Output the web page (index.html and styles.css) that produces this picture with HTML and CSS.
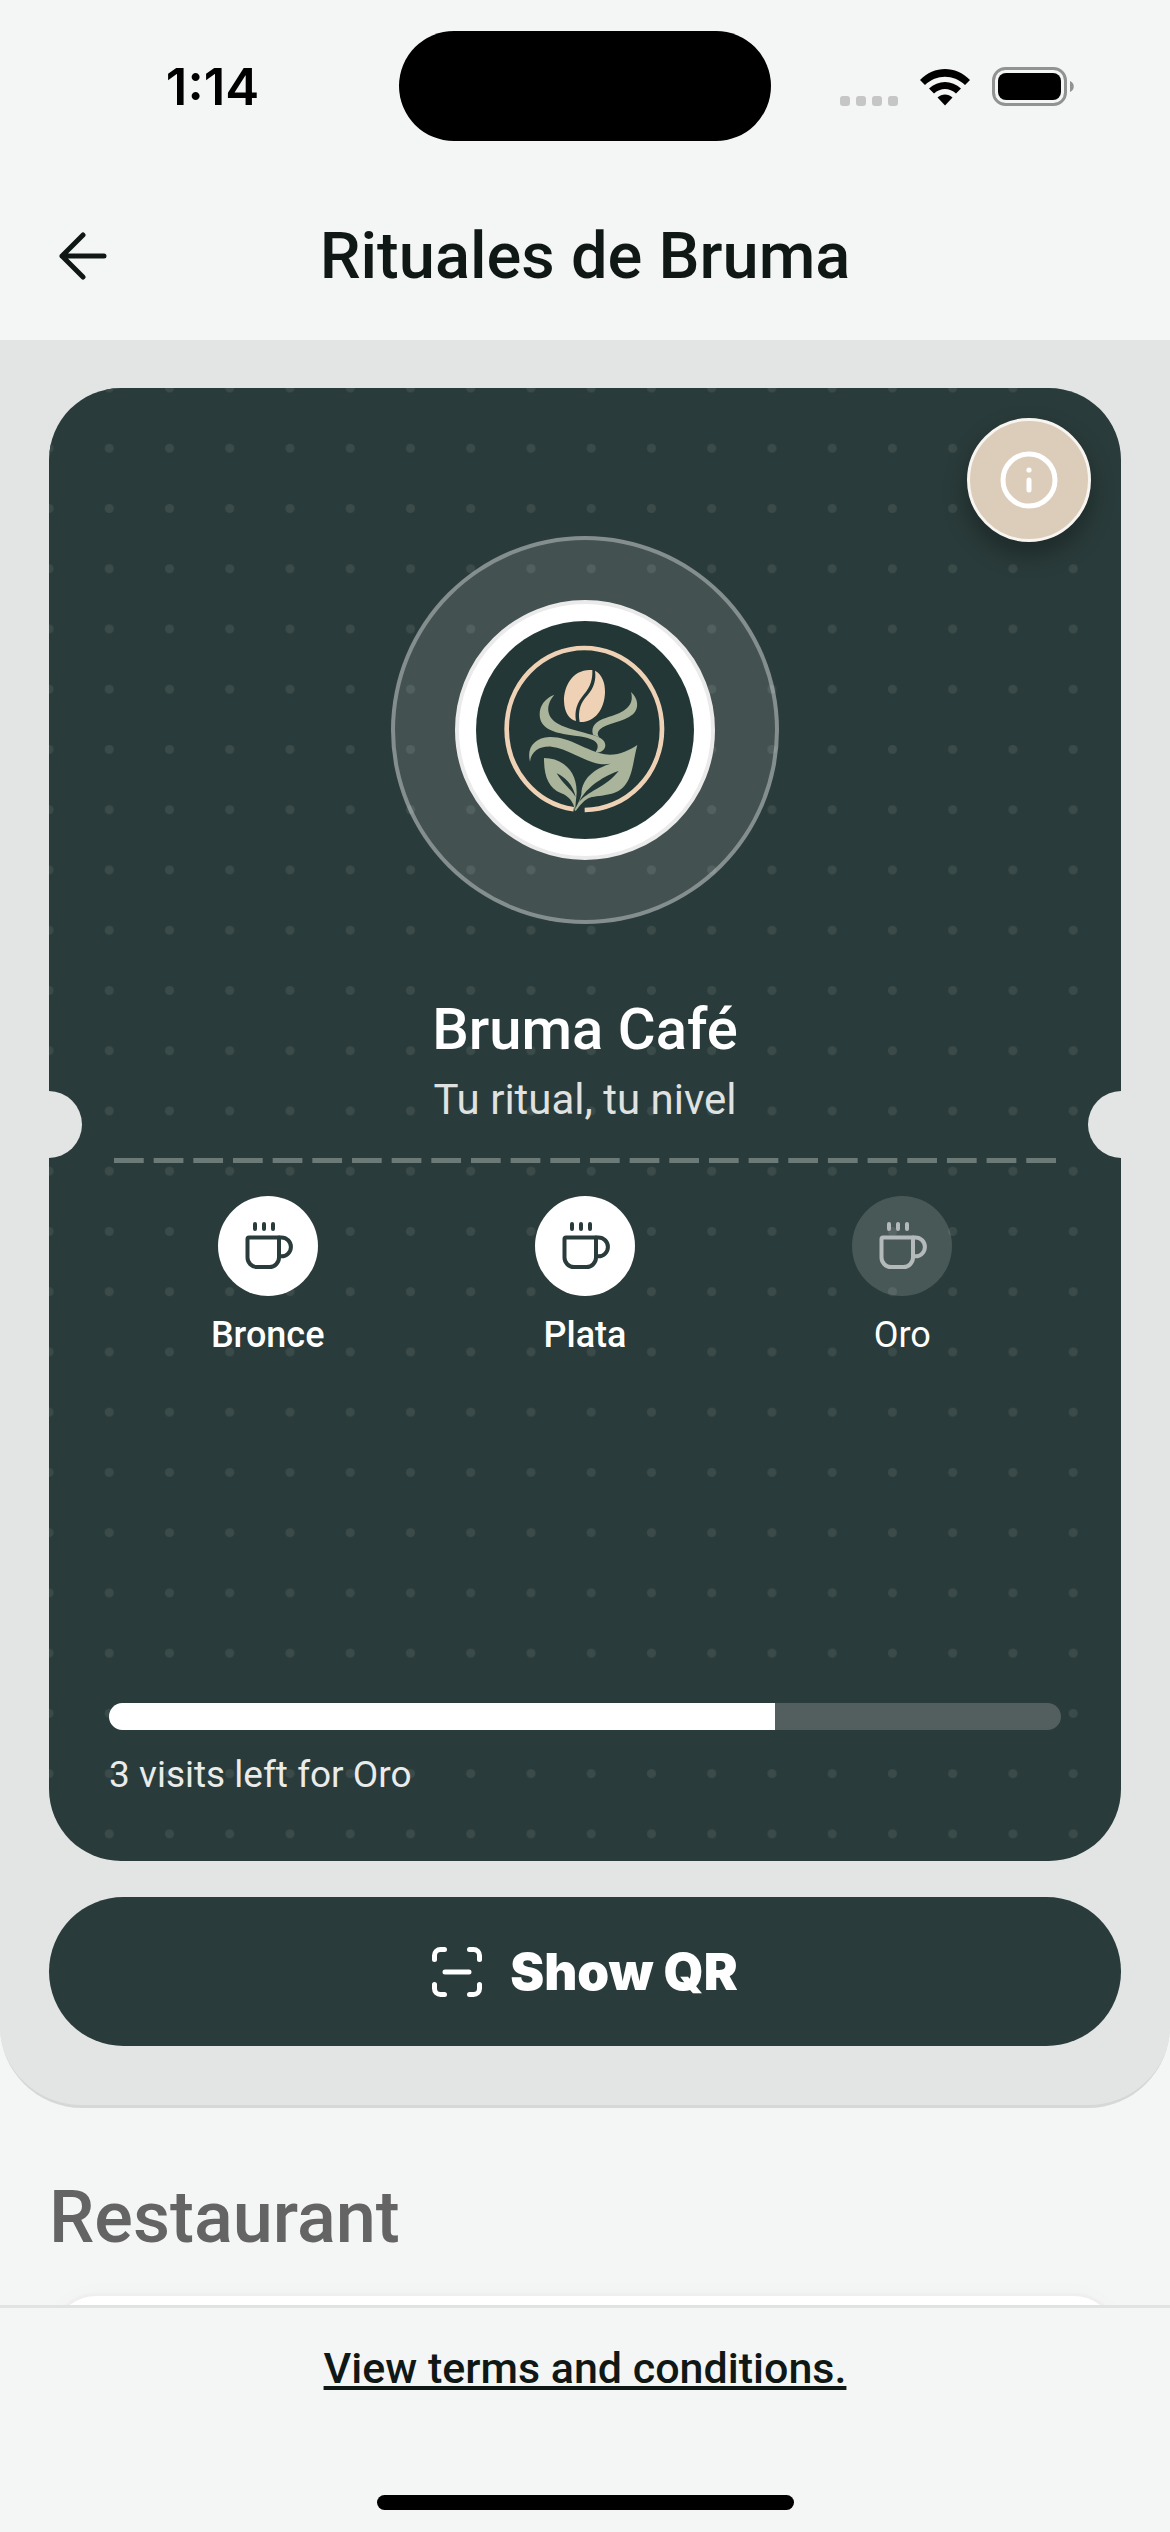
FILE: index.html
```html
<!DOCTYPE html>
<html lang="en">

<head>
    <meta charset="UTF-8">
    <meta name="viewport" content="width=device-width, initial-scale=1.0">
    <title>Rituales de Bruma</title>
    <link rel="stylesheet" href="styles.css">
</head>

<body>
    <!-- Shared icons -->
    <svg class="sprite" aria-hidden="true">
        <symbol id="cup" viewBox="0 0 100 100">
            <g fill="none" stroke="currentColor" stroke-width="4" stroke-linecap="round" stroke-linejoin="round">
                <path d="M61 41.5H31a1.5 1.5 0 0 0-1.5 1.5v18.5a9.5 9.5 0 0 0 9.5 9.5h12.5a9.5 9.5 0 0 0 9.5-9.5z" />
                <path d="M61 41.5h2.5a9.4 9.4 0 0 1 0 18.8H61" />
                <path d="M37 28v5M46 28v5M55 28v5" />
            </g>
        </symbol>
    </svg>

    <div class="status-bar">
        <span class="time">1:14</span>
        <span class="island"></span>
        <div class="status-icons">
            <svg width="58" height="10" viewBox="0 0 58 10" fill="#c5c6c5">
                <rect width="10" height="10" rx="3" />
                <rect x="16" width="10" height="10" rx="3" />
                <rect x="32" width="10" height="10" rx="3" />
                <rect x="48" width="10" height="10" rx="3" />
            </svg>
            <svg width="50" height="37" viewBox="0 0 50 37">
                <path d="M0 11C14-3.6 36-3.6 50 11l-5 5C33.5 5 16.5 5 5 16z" />
                <path d="M9 19.500c9-8.7 23-8.7 32 0l-5 5c-6.5-6-15.500-6-22 0z" />
                <path d="M17.500 28.500c4.400-4 10.600-4 15 0L25 36.500z" />
            </svg>
            <svg width="83" height="39" viewBox="0 0 83 39">
                <rect x="1.5" y="1.5" width="72" height="36" rx="12" fill="none" stroke="#919392" stroke-width="3" />
                <rect x="6" y="6" width="63" height="27" rx="8" />
                <path d="M78 14c5 2 5 9 0 11z" fill="#919392" />
            </svg>
        </div>
    </div>

    <header class="header">
        <button class="back-btn" aria-label="Back">
            <svg width="50" height="50" viewBox="0 0 50 50" fill="none" stroke="#101816" stroke-width="5" stroke-linecap="round" stroke-linejoin="round">
                <path d="M46 25H4M25 4L4 25l21 21" />
            </svg>
        </button>
        <h1>Rituales de Bruma</h1>
    </header>

    <main>
        <section class="loyalty">
            <div class="card">
                <svg class="card-dots" viewBox="0 0 356 489" preserveAspectRatio="xMinYMin slice" aria-hidden="true">
                    <pattern id="dots" x="-10" y="-10" width="20" height="20" patternUnits="userSpaceOnUse">
                        <circle cx="10" cy="10" r="1.5" />
                    </pattern>
                    <rect width="356" height="600" fill="url(#dots)" />
                </svg>

                <button class="info-btn" aria-label="Program details">
                    <svg width="58" height="58" viewBox="0 0 58 58" fill="none" stroke="#fff" stroke-width="5" stroke-linecap="round">
                        <circle cx="29" cy="29" r="26" />
                        <path d="M29 29v10" />
                        <circle cx="29" cy="19" r="2.6" fill="#fff" stroke="none" />
                    </svg>
                </button>

                <div class="logo-ring">
                    <div class="logo">
                        <svg viewBox="-41 0 654 654" role="img" aria-label="Bruma Café logo">
                            <path d="M252 564.700A233 243 0 0 1 51 324A233 243 0 0 1 517 324A233 243 0 0 1 285 567" fill="none" stroke="#efd2b5" stroke-width="14" />
                            <g fill="#efd2b5">
                                <path d="M308 147C250 142 222 195 223 240C224 275 240 297 259 300C254 270 262 245 283 220C303 197 309 175 308 147Z" />
                                <path d="M316 149C337 160 347 185 346 215C344 265 315 305 270 303C264 270 272 245 294 222C313 200 320 175 316 149Z" />
                            </g>
                            <g fill="#a9b49b">
                                <path d="M194 221C165 232 150 255 150 280C150 322 190 335 240 342C280 347 316 352 323 370C326 382 321 388 317 395C335 397 347 385 347 372C345 355 330 349 312 343C270 330 235 325 205 308C172 290 165 255 194 221Z" />
                                <path d="M424 213C445 232 450 260 430 280C400 305 350 306 331 325C323 333 322 340 328 349L310 341C302 315 320 300 350 290C395 277 437 260 424 213Z" />
                                <path d="M121 422C110 380 135 350 180 348C240 347 290 390 345 400C385 405 415 390 443 372C430 420 430 460 408 490C385 525 335 522 300 530C285 536 272 550 258 570L255 566C264 550 272 535 275 520C277 465 325 438 377 424C365 429 350 431 330 429C280 420 230 380 185 377C150 375 125 390 121 422Z" />
                                <path d="M163 411C220 412 262 450 261 515L256 570C252 540 235 525 215 517C175 500 163 465 163 411Z" />
                            </g>
                            <g fill="#233836">
                                <path d="M387 450C350 462 290 495 268 544C290 512 350 498 387 450Z" />
                                <path d="M201 457C225 468 250 490 258 528C245 505 220 490 201 457Z" />
                            </g>
                        </svg>
                    </div>
                </div>

                <h2>Bruma Café</h2>
                <p class="tagline">Tu ritual, tu nivel</p>

                <div class="divider">
                    <svg viewBox="0 0 950 5" preserveAspectRatio="none" aria-hidden="true">
                        <path d="M0 2.5H950" stroke="#6b7977" stroke-width="5" stroke-dasharray="30 10" />
                    </svg>
                </div>

                <ul class="tiers">
                    <li class="tier">
                        <svg class="tier-icon"><use href="#cup" /></svg>
                        <span>Bronce</span>
                    </li>
                    <li class="tier">
                        <svg class="tier-icon"><use href="#cup" /></svg>
                        <span>Plata</span>
                    </li>
                    <li class="tier locked">
                        <svg class="tier-icon"><use href="#cup" /></svg>
                        <span>Oro</span>
                    </li>
                </ul>

                <progress id="visits" value="70" max="100"></progress>
                <label class="visits-label" for="visits">3 visits left for Oro</label>
            </div>

            <button class="qr-btn">
                <svg width="50" height="50" viewBox="0 0 50 50" fill="none" stroke="#fff" stroke-width="5" stroke-linecap="round" stroke-linejoin="round">
                    <path d="M2.5 12.5v-4a6 6 0 0 1 6-6h4M37.5 2.5h4a6 6 0 0 1 6 6v4M47.5 37.5v4a6 6 0 0 1-6 6h-4M12.5 47.5h-4a6 6 0 0 1-6-6v-4M13 25h24" />
                </svg>
                Show QR
            </button>
        </section>

        <section class="restaurant">
            <h2>Restaurant</h2>
            <div class="restaurant-card"></div>
        </section>
    </main>

    <footer class="footer">
        <a href="#terms">View terms and conditions.</a>
        <span class="home-indicator"></span>
    </footer>
</body>

</html>
```
FILE: styles.css
```css
* {
    box-sizing: border-box;
}

body {
    display: flex;
    flex-direction: column;
    height: 100vh;
    margin: 0;
    background: #f4f6f5;
    color: #101816;
    font-family: Roboto, sans-serif;
}

h1,
h2,
p,
ul {
    margin: 0;
    padding: 0;
}

button {
    padding: 0;
    border: none;
    background: none;
    cursor: pointer;
}

svg {
    display: block;
}

.sprite {
    position: absolute;
    width: 0;
    height: 0;
}

/* Status bar */
.status-bar {
    display: grid;
    grid-template-columns: 1fr 372px 1fr;
    align-items: center;
    flex-shrink: 0;
    height: 172px;
}

.time {
    padding-left: 26px;
    color: #000;
    font-family: Inter, sans-serif;
    font-size: 51px;
    font-weight: 600;
    text-align: center;
}

.island {
    height: 110px;
    border-radius: 55px;
    background: #000;
}

.status-icons {
    display: flex;
    justify-content: center;
    align-items: flex-end;
    gap: 22px;
    padding-right: 26px;
}

/* Header */
.header {
    display: grid;
    grid-template-columns: 1fr auto 1fr;
    align-items: center;
    flex-shrink: 0;
    height: 168px;
    padding: 0 58px;
}

.header h1 {
    font-size: 65px;
    font-weight: 500;
    line-height: 80px;
}

.back-btn {
    justify-self: start;
}

main {
    flex: 1;
    min-height: 0;
    overflow: hidden;
}

/* Loyalty card */
.loyalty {
    padding: 48px 49px 59px;
    border-bottom: 3px solid #d6d8d7;
    border-radius: 0 0 82px 82px;
    background: #e2e5e4;
}

.card {
    position: relative;
    display: flex;
    flex-direction: column;
    align-items: center;
    min-height: 1473px;
    padding: 148px 60px 64px;
    border-radius: 72px;
    background: #293b3a;
    color: #fff;
    overflow: hidden;
}

.card > * {
    position: relative;
}

.card .card-dots {
    position: absolute;
    top: 0;
    left: 0;
    width: 100%;
    height: 100%;
    fill: #3b4b4a;
}

.card .info-btn {
    position: absolute;
    top: 30px;
    right: 30px;
    display: flex;
    justify-content: center;
    align-items: center;
    width: 124px;
    height: 124px;
    border: 3px solid #f8f5f1;
    border-radius: 50%;
    background: #dccdba;
    box-shadow: 0 12px 24px rgba(0, 0, 0, 0.3);
}

.logo-ring {
    display: flex;
    justify-content: center;
    align-items: center;
    width: 388px;
    height: 388px;
    border: 4px solid rgba(255, 255, 255, 0.35);
    border-radius: 50%;
    background: rgba(255, 255, 255, 0.12);
}

.logo {
    width: 260px;
    height: 260px;
    padding: 17px;
    border: 4px solid #ebeaea;
    border-radius: 50%;
    background: #fff;
}

.logo svg {
    border-radius: 50%;
    background: #233836;
}

.card h2 {
    margin-top: 71px;
    font-size: 58px;
    font-weight: 500;
    line-height: 68px;
}

.tagline {
    margin-top: 13px;
    color: #dfe2e1;
    font-size: 42px;
    line-height: 48px;
}

.divider {
    width: 100%;
    margin: 34px 0 33px;
    padding: 0 5px;
}

.divider svg {
    width: 100%;
    height: 5px;
}

/* Ticket notches on the card edges */
.divider::before,
.divider::after {
    content: "";
    position: absolute;
    bottom: 5px;
    width: 67px;
    height: 67px;
    border-radius: 50%;
    background: #e2e5e4;
}

.divider::before {
    left: -94px;
}

.divider::after {
    right: -94px;
}

.tiers {
    display: flex;
    width: 100%;
    list-style: none;
}

.tier {
    display: flex;
    flex: 1;
    flex-direction: column;
    align-items: center;
    gap: 17px;
    font-size: 36px;
    font-weight: 500;
    line-height: 44px;
}

.tier-icon {
    width: 100px;
    height: 100px;
    border-radius: 50%;
    background: #fff;
    color: #293b3a;
}

.locked {
    font-weight: 400;
}

.locked .tier-icon {
    background: rgba(255, 255, 255, 0.15);
    color: #b4bab9;
}

progress {
    width: 100%;
    height: 27px;
    margin-top: auto;
    border: none;
    border-radius: 14px;
    overflow: hidden;
    appearance: none;
}

progress::-webkit-progress-bar {
    background: #535f5e;
}

progress::-webkit-progress-value {
    background: #fff;
}

.visits-label {
    align-self: flex-start;
    margin-top: 23px;
    color: #eaebeb;
    font-size: 37px;
    line-height: 44px;
}

.qr-btn {
    display: flex;
    justify-content: center;
    align-items: center;
    gap: 28px;
    width: 100%;
    height: 149px;
    margin-top: 36px;
    border-radius: 75px;
    background: #293b3a;
    color: #fff;
    font-family: Inter, sans-serif;
    font-size: 51px;
    font-weight: 900;
}

/* Restaurant */
.restaurant {
    padding: 66px 49px 0;
}

.restaurant h2 {
    color: #646464;
    font-size: 72px;
    font-weight: 500;
    line-height: 88px;
}

.restaurant-card {
    height: 300px;
    margin-top: 31px;
    border: 3px solid #efefef;
    border-radius: 48px;
    background: #fff;
    box-shadow: 0 0 24px rgba(0, 0, 0, 0.02);
}

/* Footer */
.footer {
    display: flex;
    flex-direction: column;
    justify-content: space-between;
    align-items: center;
    flex-shrink: 0;
    height: 227px;
    padding: 32px 49px 22px;
    border-top: 3px solid #e0e3e2;
    background: #f4f6f5;
}

.footer a {
    color: #101816;
    font-size: 43px;
    font-weight: 500;
    line-height: 56px;
}

.home-indicator {
    width: 417px;
    height: 15px;
    border-radius: 8px;
    background: #000;
}
```
